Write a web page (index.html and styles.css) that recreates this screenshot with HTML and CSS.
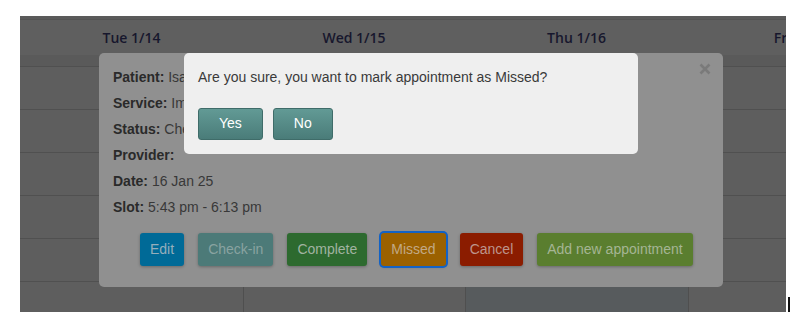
FILE: index.html
```html
<!DOCTYPE html>
<html>
<head>
<meta charset="utf-8">
<link rel="stylesheet" href="styles.css">
</head>
<body>
<div class="page">
  <div class="cal">
    <div class="cal-head">
      <div class="day">Tue 1/14</div>
      <div class="day">Wed 1/15</div>
      <div class="day">Thu 1/16</div>
      <div class="day">Fri 1/17</div>
    </div>
    <div class="cal-body">
      <div class="col">
        <div class="allday"></div>
        <div class="slot"></div><div class="slot"></div><div class="slot"></div><div class="slot"></div><div class="slot"></div><div class="slot"></div>
      </div>
      <div class="col">
        <div class="allday"></div>
        <div class="slot"></div><div class="slot"></div><div class="slot"></div><div class="slot"></div><div class="slot"></div><div class="slot"></div>
      </div>
      <div class="col today">
        <div class="allday"></div>
        <div class="slot"></div><div class="slot"></div><div class="slot"></div><div class="slot"></div><div class="slot"></div><div class="slot"></div>
      </div>
      <div class="col">
        <div class="allday"></div>
        <div class="slot"></div><div class="slot"></div><div class="slot"></div><div class="slot"></div><div class="slot"></div><div class="slot"></div>
      </div>
    </div>

    <div class="modal">
      <button class="close" aria-label="Close">
        <svg width="12" height="12" viewBox="0 0 12 12"><path d="M1.5 1.5 L10.5 10.5 M10.5 1.5 L1.5 10.5" stroke="#7a7a7a" stroke-width="2.6" stroke-linecap="butt" fill="none"/></svg>
      </button>
      <div class="details">
        <div class="line"><b>Patient:</b> Isabella Garcia</div>
        <div class="line"><b>Service:</b> Immunization</div>
        <div class="line"><b>Status:</b> Checked In</div>
        <div class="line"><b>Provider:</b></div>
        <div class="line"><b>Date:</b> 16 Jan 25</div>
        <div class="line"><b>Slot:</b> 5:43 pm - 6:13 pm</div>
      </div>
      <div class="actions">
        <button class="btn btn-edit">Edit</button>
        <button class="btn btn-checkin">Check-in</button>
        <button class="btn btn-complete">Complete</button>
        <button class="btn btn-missed">Missed</button>
        <button class="btn btn-cancel">Cancel</button>
        <button class="btn btn-add">Add new appointment</button>
      </div>
    </div>

    <div class="confirm">
      <p>Are you sure, you want to mark appointment as Missed?</p>
      <div class="confirm-btns">
        <button class="cbtn">Yes</button>
        <button class="cbtn">No</button>
      </div>
    </div>
  </div>
  <span class="caret"></span>
</div>
</body>
</html>
```
FILE: styles.css
```css
* { box-sizing: border-box; }
body {
  margin: 0;
  background: #ffffff;
  font-family: "Liberation Sans", Arial, sans-serif;
}
.page {
  display: flex;
  align-items: flex-end;
  padding: 16px 0 0 20px;
}
.cal {
  position: relative;
  flex: none;
  width: 766px;
  height: 296px;
  overflow: hidden;
  background: #5e5e5e;
}
.cal-head {
  display: grid;
  grid-template-columns: 223px 222px 223px 222px;
  height: 39px;
  border-top: 3px solid #5a5a5a;
}
.day {
  border-top: 1px solid #545454;
  background: #5f5f5f;
  display: flex;
  align-items: center;
  justify-content: center;
  font-family: "Open Sans", sans-serif;
  font-weight: 600;
  font-size: 14px;
  color: #17172d;
}
.cal-body {
  display: grid;
  grid-template-columns: 223px 222px 223px 222px;
}
.col + .col { border-left: 1px solid #4f4f4f; }
.allday {
  height: 12px;
  background: #5a5a5a;
  border-bottom: 1px solid #505050;
}
.slot {
  height: 43px;
  border-bottom: 1px solid #505050;
}
.today .slot { background: #575b5d; }

.modal {
  position: absolute;
  left: 79px;
  top: 37px;
  width: 624px;
  height: 234px;
  background: #909090;
  border-radius: 5px;
  padding: 11px 0 0 14px;
}
.close {
  position: absolute;
  left: 600px;
  top: 10px;
  width: 12px;
  height: 12px;
  padding: 0;
  border: 0;
  background: none;
  display: block;
}
.close svg { display: block; }
.details {
  font-size: 14px;
  line-height: 26px;
  color: #383838;
}
.details b { color: #2a2a2a; }
.actions {
  display: flex;
  gap: 14px;
  margin: 13px 0 0 27px;
}
.btn {
  font-family: "Liberation Sans", Arial, sans-serif;
  font-size: 14px;
  line-height: 17px;
  padding: 8px 10px;
  border: 0;
  border-radius: 3px;
  color: #9c9c9c;
  box-shadow: 0 1px 3px rgba(0,0,0,0.28);
}
.btn-edit { background: #006a97; color: #95aebb; }
.btn-checkin { background: #4c7a78; color: #89a3a1; }
.btn-complete { background: #2d6a2f; color: #a1b3a1; }
.btn-missed {
  background: #9b6100;
  color: #c2a985;
  box-shadow: 0 0 0 2px #1262c6, 0 1px 3px rgba(0,0,0,0.28);
}
.btn-cancel { background: #8b1c00; color: #bd958c; }
.btn-add { background: #5a7e2f; color: #a5b594; }

.confirm {
  position: absolute;
  left: 164px;
  top: 37px;
  width: 454px;
  height: 101px;
  background: #efefef;
  border-radius: 5px;
  padding: 14px;
}
.confirm p {
  margin: 0;
  font-size: 14px;
  line-height: 20px;
  color: #3a3a3a;
}
.confirm-btns {
  display: flex;
  gap: 10px;
  margin-top: 21px;
}
.cbtn {
  font-family: "Liberation Sans", Arial, sans-serif;
  font-size: 14px;
  line-height: 16px;
  padding: 6px 20px 8px;
  border: 1px solid #3f6c69;
  border-radius: 3px;
  color: #ffffff;
  background: linear-gradient(#629a95, #4a7c79);
}
.caret {
  flex: none;
  width: 2px;
  height: 17px;
  margin: 0 0 -2px 2px;
  background: #111111;
}
```
